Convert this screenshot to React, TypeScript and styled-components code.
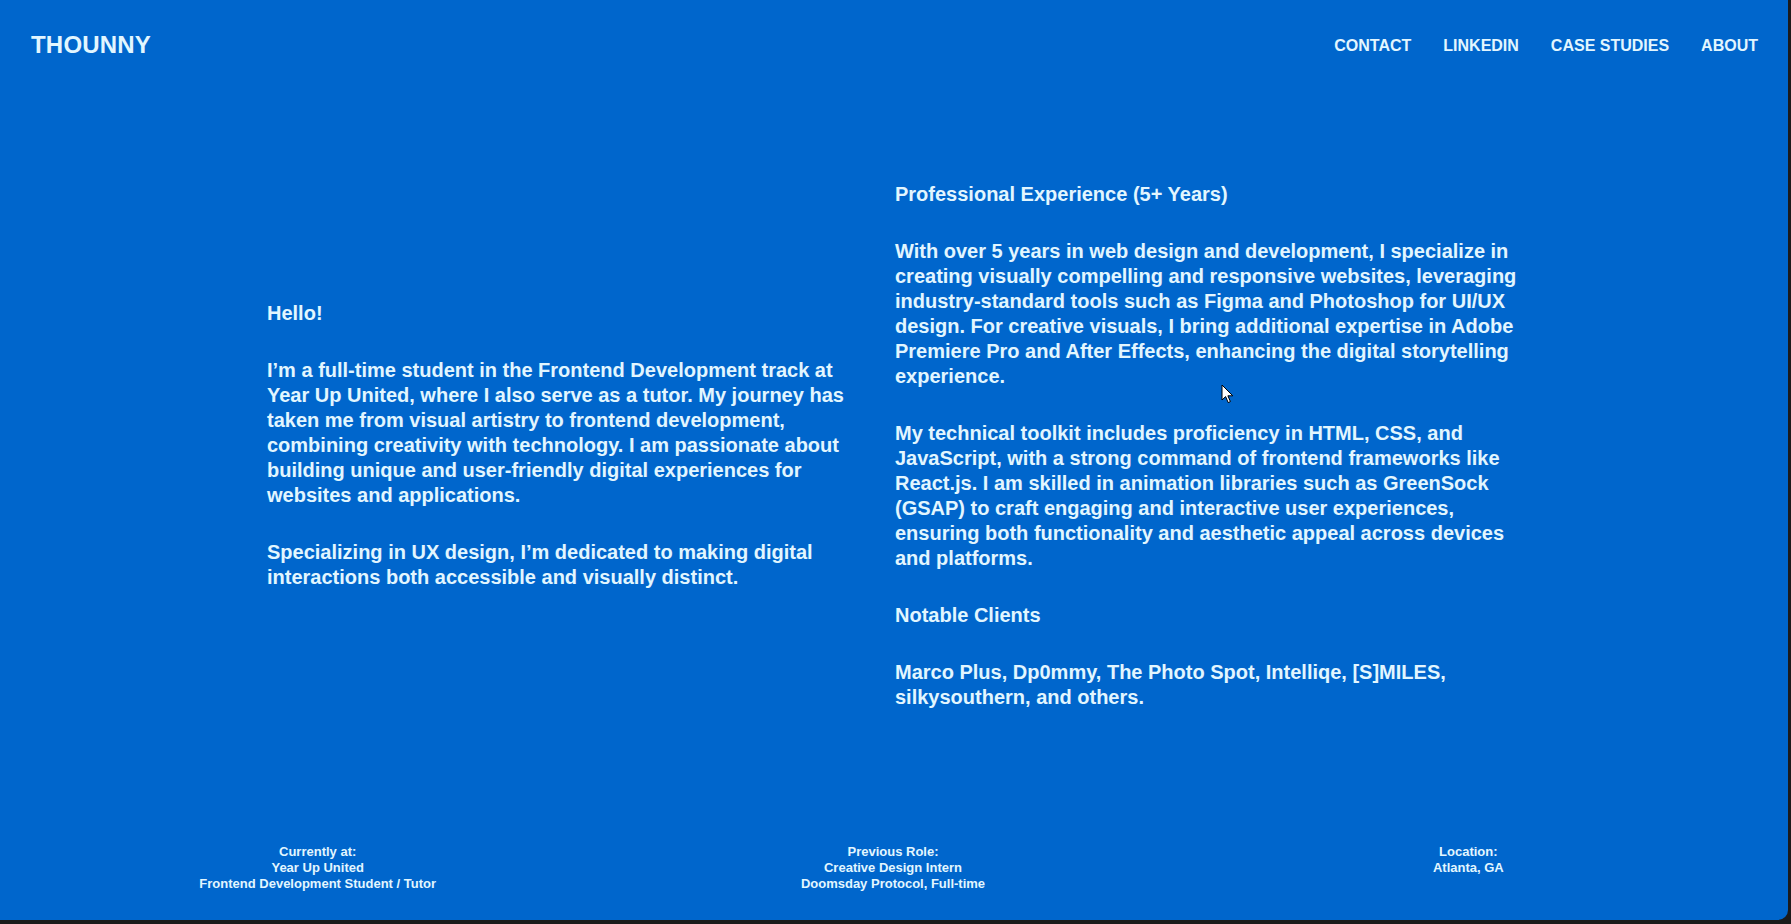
import React from "react";
import styled, { createGlobalStyle } from "styled-components";

const GlobalStyle = createGlobalStyle`
  html, body {
    margin: 0;
    padding: 0;
    background: #1b1b1b;
    overflow: hidden;
  }
  * { box-sizing: border-box; }
`;

const Window = styled.div`
  position: relative;
  width: calc(100vw - 3px);
  height: calc(100vh - 4px);
  background: #0066cc;
  border-bottom-right-radius: 10px;
  color: #e2f6ff;
  font-family: "Liberation Sans", Arial, Helvetica, sans-serif;
  font-weight: 700;
  display: flex;
  flex-direction: column;
  overflow: hidden;
`;

const Header = styled.header`
  display: flex;
  align-items: flex-start;
  justify-content: space-between;
  padding: 31px 30px 0 31px;
  height: 90px;
`;

const Logo = styled.div`
  font-size: 24px;
  line-height: 28px;
  letter-spacing: 0.2px;
`;

const Nav = styled.nav`
  display: flex;
  gap: 32px;
  padding-top: 5px;
`;

const NavLink = styled.a`
  font-size: 16px;
  line-height: 20px;
  color: inherit;
  text-decoration: none;
  text-transform: uppercase;
`;

const Main = styled.main`
  flex: 1;
  display: flex;
  align-items: center;
  justify-content: center;
  padding-bottom: 43px;
`;

const Columns = styled.div`
  display: grid;
  grid-template-columns: 600px 630px;
  column-gap: 28px;
  align-items: center;
  margin-left: 4px;
`;

const Column = styled.div`
  display: flex;
  flex-direction: column;
  gap: 32px;
`;

const Para = styled.p`
  margin: 0;
  font-size: 20px;
  line-height: 25px;
`;

const Footer = styled.footer`
  display: grid;
  grid-template-columns: repeat(3, 1fr);
  padding: 0 32px 28px 30px;
`;

const FooterBlock = styled.div`
  text-align: center;
  font-size: 13px;
  line-height: 16px;
`;

const Line = styled.div``;

const Cursor = styled.svg`
  position: absolute;
  left: 1221px;
  top: 384px;
  width: 13px;
  height: 20px;
  pointer-events: none;
`;

const navItems = ["Contact", "LinkedIn", "Case Studies", "About"];

const footerData = [
  ["Currently at:", "Year Up United", "Frontend Development Student / Tutor"],
  ["Previous Role:", "Creative Design Intern", "Doomsday Protocol, Full-time"],
  ["Location:", "Atlanta, GA"],
];

export default function App() {
  return (
    <>
      <GlobalStyle />
      <Window>
        <Header>
          <Logo>THOUNNY</Logo>
          <Nav>
            {navItems.map((n) => (
              <NavLink key={n} href="#">
                {n}
              </NavLink>
            ))}
          </Nav>
        </Header>
        <Main>
          <Columns>
            <Column>
              <Para>Hello!</Para>
              <Para>
                I’m a full-time student in the Frontend Development track at Year Up United, where I also
                serve as a tutor. My journey has taken me from visual artistry to frontend development,
                combining creativity with technology. I am passionate about building unique and
                user-friendly digital experiences for websites and applications.
              </Para>
              <Para>
                Specializing in UX design, I’m dedicated to making digital interactions both accessible and
                visually distinct.
              </Para>
            </Column>
            <Column>
              <Para>Professional Experience (5+ Years)</Para>
              <Para>
                With over 5 years in web design and development, I specialize in creating visually
                compelling and responsive websites, leveraging industry-standard tools such as Figma and
                Photoshop for UI/UX design. For creative visuals, I bring additional expertise in Adobe
                Premiere Pro and After Effects, enhancing the digital storytelling experience.
              </Para>
              <Para>
                My technical toolkit includes proficiency in HTML, CSS, and JavaScript, with a strong
                command of frontend frameworks like React.js. I am skilled in animation libraries such as
                GreenSock (GSAP) to craft engaging and interactive user experiences, ensuring both
                functionality and aesthetic appeal across devices and platforms.
              </Para>
              <Para>Notable Clients</Para>
              <Para>Marco Plus, Dp0mmy, The Photo Spot, Intelliqe, [S]MILES, silkysouthern, and others.</Para>
            </Column>
          </Columns>
        </Main>
        <Footer>
          {footerData.map((block, i) => (
            <FooterBlock key={i}>
              {block.map((l) => (
                <Line key={l}>{l}</Line>
              ))}
            </FooterBlock>
          ))}
        </Footer>
        <Cursor viewBox="0 0 13 20">
          <path
            d="M1 1 L1 16 L4.6 12.6 L7.2 18.6 L9.4 17.6 L6.9 11.8 L11.8 11.8 Z"
            fill="#ffffff"
            stroke="#000000"
            strokeWidth="1"
            strokeLinejoin="round"
          />
        </Cursor>
      </Window>
    </>
  );
}
